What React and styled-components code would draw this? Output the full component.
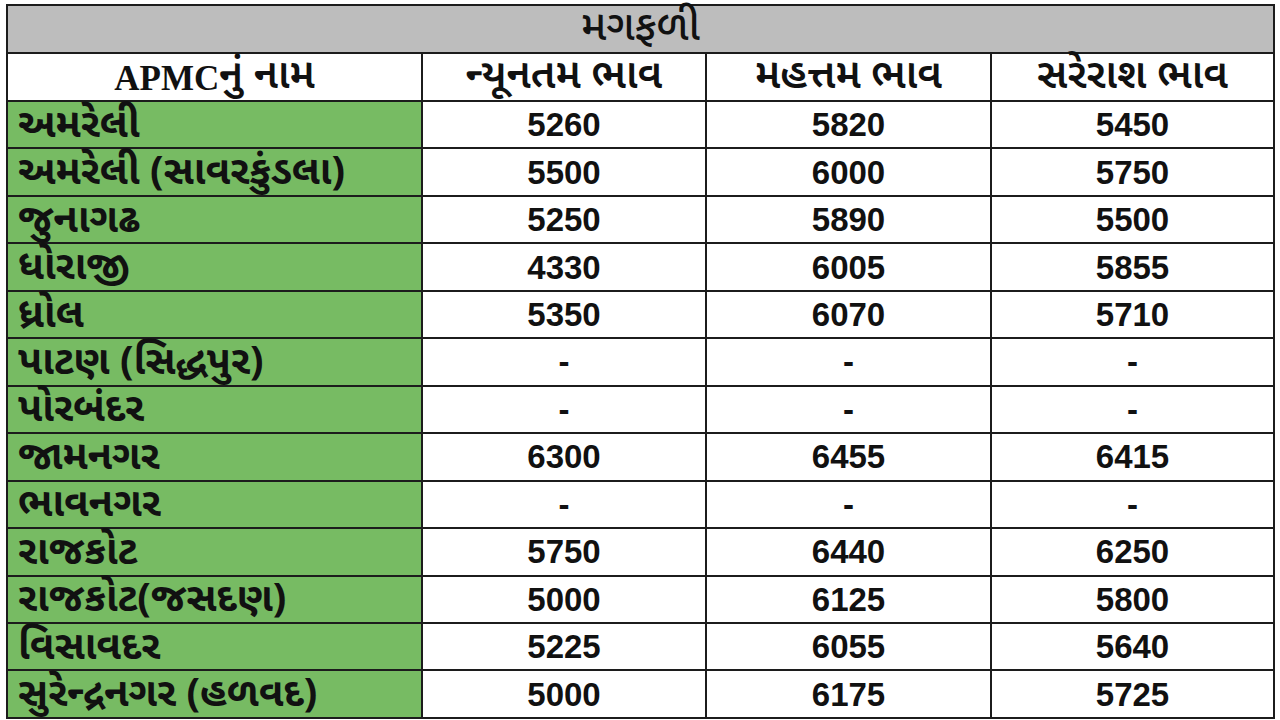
import React from 'react';
import styled, { createGlobalStyle } from 'styled-components';

const GlobalStyle = createGlobalStyle`
  body {
    margin: 0;
    background: #ffffff;
    font-family: "Noto Sans Gujarati", "Lohit Gujarati", "Noto Sans", "Liberation Sans", sans-serif;
  }
`;

const Page = styled.div`
  width: 1280px;
  padding: 4px 5px 0 6px;
  box-sizing: border-box;
`;

const Table = styled.div`
  display: grid;
  grid-template-columns: 413px 282px 283px 281px;
  grid-template-rows: 46px 46px repeat(13, 45.46px);
  gap: 2px;
  padding: 2px;
  background: #1c1c1c;
  width: max-content;
`;

const Title = styled.div`
  grid-column: 1 / -1;
  background: #bdbdbd;
  display: flex;
  align-items: center;
  justify-content: center;
  padding-top: 1px;
  font-size: 42px;
  font-weight: 500;
  line-height: 1;
  color: #111;
`;

const HeadCell = styled.div`
  background: #ffffff;
  display: flex;
  align-items: center;
  justify-content: center;
  padding-top: 2px;
  font-size: 41px;
  font-weight: 600;
  line-height: 1;
  color: #111;
  white-space: nowrap;
`;

const Latin = styled.span`
  font-family: "Liberation Serif", serif;
  font-weight: 700;
  font-size: 35px;
`;

const NameCell = styled.div`
  background: #77bb63;
  display: flex;
  align-items: center;
  padding: 4px 0 0 10px;
  font-size: 40px;
  font-weight: 700;
  line-height: 1;
  color: #111;
  white-space: nowrap;
`;

const ValueCell = styled.div`
  background: #ffffff;
  display: flex;
  align-items: center;
  justify-content: center;
  font-family: "Liberation Sans", Arial, sans-serif;
  font-size: 33px;
  font-weight: 700;
  line-height: 1;
  color: #111;
`;

const rows = [
  ['અમરેલી', '5260', '5820', '5450'],
  ['અમરેલી (સાવરકુંડલા)', '5500', '6000', '5750'],
  ['જુનાગઢ', '5250', '5890', '5500'],
  ['ધોરાજી', '4330', '6005', '5855'],
  ['ધ્રોલ', '5350', '6070', '5710'],
  ['પાટણ (સિદ્ધપુર)', '-', '-', '-'],
  ['પોરબંદર', '-', '-', '-'],
  ['જામનગર', '6300', '6455', '6415'],
  ['ભાવનગર', '-', '-', '-'],
  ['રાજકોટ', '5750', '6440', '6250'],
  ['રાજકોટ(જસદણ)', '5000', '6125', '5800'],
  ['વિસાવદર', '5225', '6055', '5640'],
  ['સુરેન્દ્રનગર (હળવદ)', '5000', '6175', '5725'],
];

export default function App() {
  return (
    <Page>
      <GlobalStyle />
      <Table>
        <Title>મગફળી</Title>
        <HeadCell><Latin>APMC</Latin>નું નામ</HeadCell>
        <HeadCell>ન્યૂનતમ ભાવ</HeadCell>
        <HeadCell>મહત્તમ ભાવ</HeadCell>
        <HeadCell>સરેરાશ ભાવ</HeadCell>
        {rows.map((r) => (
          <React.Fragment key={r[0]}>
            <NameCell>{r[0]}</NameCell>
            <ValueCell>{r[1]}</ValueCell>
            <ValueCell>{r[2]}</ValueCell>
            <ValueCell>{r[3]}</ValueCell>
          </React.Fragment>
        ))}
      </Table>
    </Page>
  );
}
